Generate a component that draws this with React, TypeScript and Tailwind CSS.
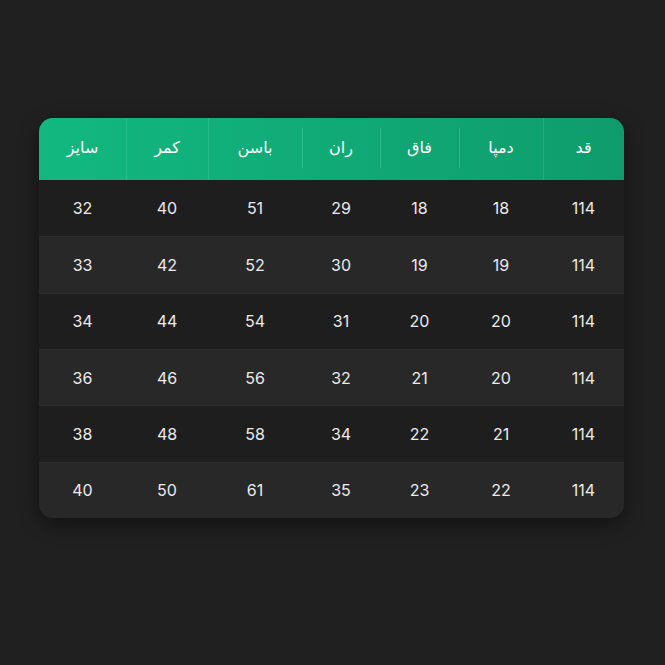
import React from "react";

const headers = ["قد", "دمپا", "فاق", "ران", "باسن", "کمر", "سایز"];
const widths = ["w-[81px]", "w-[84px]", "w-[79px]", "w-[78px]", "w-[94px]", "w-[82px]", "w-[87px]"];
const rows = [
  ["114", "18", "18", "29", "51", "40", "32"],
  ["114", "19", "19", "30", "52", "42", "33"],
  ["114", "20", "20", "31", "54", "44", "34"],
  ["114", "20", "21", "32", "56", "46", "36"],
  ["114", "21", "22", "34", "58", "48", "38"],
  ["114", "22", "23", "35", "61", "50", "40"],
];
const sepFull = [true, false, false, false, true, true];

export default function App() {
  return (
    <div
      className="w-[665px] h-[665px] bg-[#202020] pt-[118px] pl-[39px]"
      style={{ fontFamily: "Inter, 'DejaVu Sans', sans-serif" }}
    >
      <div
        dir="rtl"
        className="w-[585px] rounded-[14px] overflow-hidden shadow-[0_6px_20px_rgba(0,0,0,0.45)] bg-[#1e1e1e]"
      >
        <div className="flex h-[62px] bg-gradient-to-l from-[#0f9c6c] to-[#12b880]">
          {headers.map((h, i) => (
            <div key={h} className={`${widths[i]} relative flex items-center justify-center`}>
              <span className="text-white text-[16px] pb-[2px]" style={{ fontFamily: "'DejaVu Sans', sans-serif" }}>
                {h}
              </span>
              {i < 6 && (
                <div
                  className={
                    sepFull[i]
                      ? "absolute left-0 top-0 bottom-0 w-px bg-white/10"
                      : "absolute left-0 top-[10px] bottom-[12px] w-px bg-white/15"
                  }
                />
              )}
            </div>
          ))}
        </div>
        {rows.map((r, ri) => (
          <div
            key={ri}
            className={`flex h-[56.33px] ${ri === 0 ? "" : "border-t border-[#2d2d2d]"} ${
              ri % 2 === 0 ? "bg-[#1e1e1e]" : "bg-[#282828]"
            }`}
          >
            {r.map((v, ci) => (
              <div key={ci} className={`${widths[ci]} flex items-center justify-center`}>
                <span className="text-[#ebebeb] text-[16px]">{v}</span>
              </div>
            ))}
          </div>
        ))}
      </div>
    </div>
  );
}
